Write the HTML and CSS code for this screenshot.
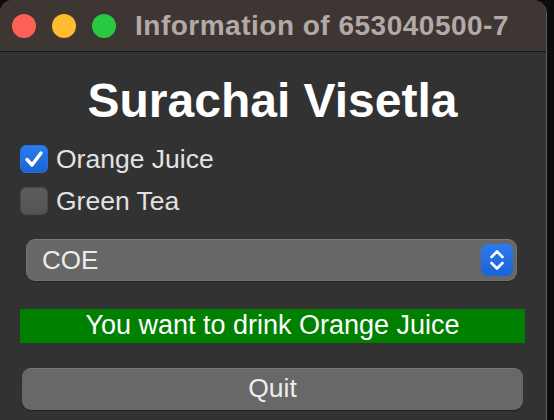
FILE: index.html
```html
<!DOCTYPE html>
<html>
<head>
<meta charset="utf-8">
<link rel="stylesheet" href="styles.css">
</head>
<body>
<div class="window">
  <div class="titlebar">
    <span class="light red"></span>
    <span class="light yellow"></span>
    <span class="light green"></span>
    <span class="title">Information of 653040500-7</span>
  </div>
  <div class="content">
    <h1 class="heading">Surachai Visetla</h1>
    <label class="check-row first">
      <span class="box checked">
        <svg viewBox="0 0 28 28" width="28" height="28"><path d="M7 14.5 L12 20 L21 8" fill="none" stroke="#fff" stroke-width="3.4" stroke-linecap="round" stroke-linejoin="round"/></svg>
      </span>
      <span class="check-label">Orange Juice</span>
    </label>
    <label class="check-row second">
      <span class="box"></span>
      <span class="check-label">Green Tea</span>
    </label>
    <div class="select">
      <span class="select-text">COE</span>
      <span class="select-btn">
        <svg viewBox="0 0 32 32" width="32" height="32"><path d="M10.5 13 L16 7.5 L21.5 13 M10.5 19 L16 24.5 L21.5 19" fill="none" stroke="#fff" stroke-width="2.6" stroke-linecap="round" stroke-linejoin="round"/></svg>
      </span>
    </div>
    <div class="result">You want to drink Orange Juice</div>
    <div class="quit">Quit</div>
  </div>
</div>
</body>
</html>
```

FILE: styles.css
```css
html, body {
  margin: 0;
  padding: 0;
  background: #0c0c0c;
  width: 554px;
  height: 420px;
  overflow: hidden;
}
.window {
  width: 546px;
  height: 440px;
  background: #323232;
  border-right: 1px solid #5e5e5e;
  border-radius: 12px 14px 14px 0;
  overflow: hidden;
  font-family: "Liberation Sans", Arial, sans-serif;
}
.titlebar {
  height: 52px;
  background: #3e3633;
  border-bottom: 1px solid #141414;
  display: flex;
  align-items: center;
  padding-left: 12px;
  padding-top: 1px;
  box-sizing: border-box;
}
.light {
  width: 24px;
  height: 24px;
  border-radius: 50%;
  margin-right: 16px;
}
.light.red { background: #fe5f57; }
.light.yellow { background: #febc2e; }
.light.green { background: #28c840; margin-right: 19px; }
.title {
  color: #b3a9a6;
  font-weight: bold;
  font-size: 28px;
  letter-spacing: 0.5px;
}
.content {
  display: flex;
  flex-direction: column;
  padding: 0 21px 0 20px;
}
.heading {
  margin: 22px 0 0 0;
  font-size: 48px;
  line-height: 54px;
  font-weight: bold;
  color: #ffffff;
  text-align: center;
}
.check-row {
  display: flex;
  align-items: center;
  height: 28px;
}
.check-row.first { margin-top: 17px; }
.check-row.second { margin-top: 14px; }
.box {
  width: 28px;
  height: 28px;
  box-sizing: border-box;
  border-radius: 6px;
  background: linear-gradient(#5c5c5c, #545454);
  border: 1px solid #4a4a4a;
  display: flex;
}
.box.checked {
  background: linear-gradient(#2a7cf0, #1a64d4);
  border-color: #2a6fd8;
}
.box svg { margin: -1px; }
.check-label {
  margin-left: 8px;
  color: #e2e2e2;
  font-size: 26.5px;
  line-height: 28px;
}
.select {
  margin: 24px 8px 0 6px;
  height: 42px;
  box-sizing: border-box;
  background: #676767;
  border: 1px solid #727272;
  border-top-color: #7a7a7a;
  border-radius: 9px;
  display: flex;
  align-items: center;
  justify-content: space-between;
  padding: 0 3px 0 15px;
  box-shadow: 0 1px 1px rgba(0,0,0,0.3);
}
.select-text {
  color: #ececec;
  font-size: 26px;
}
.select-btn {
  width: 32px;
  height: 32px;
  border-radius: 7px;
  background: linear-gradient(#2b7af0, #1b63d6);
  display: flex;
}
.result {
  margin-top: 28px;
  height: 34px;
  background: #008000;
  color: #ffffff;
  font-size: 27px;
  line-height: 33px;
  text-align: center;
}
.quit {
  margin: 25px 2px 0 2px;
  height: 42px;
  box-sizing: border-box;
  background: #686868;
  border-top: 1px solid #787878;
  border-radius: 9px;
  color: #ececec;
  font-size: 26.5px;
  line-height: 39px;
  text-align: center;
  box-shadow: 0 1px 1px rgba(0,0,0,0.35);
}
```
